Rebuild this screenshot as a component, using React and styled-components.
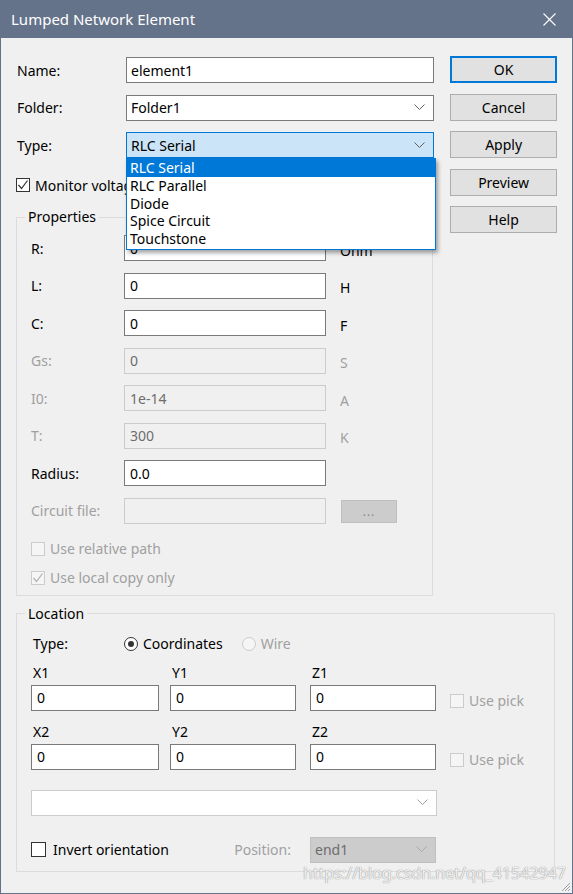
import styled, { createGlobalStyle } from "styled-components";

const GlobalStyle = createGlobalStyle`
  html, body { margin: 0; padding: 0; background: #ffffff; }
  body {
    font-family: "Noto Sans", "Open Sans", sans-serif;
    font-size: 14px;
    color: #000;
  }
  * { box-sizing: border-box; }
`;

const Window = styled.div`
  position: relative;
  width: 573px;
  height: 894px;
  background: #f0f0f0;
  border: 1px solid #65738a;
  border-top: none;
  overflow: hidden;
`;

const TitleBar = styled.div`
  height: 38px;
  margin: 0 -1px;
  background: #65738a;
  color: #fff;
  display: flex;
  align-items: center;
  justify-content: space-between;
  padding: 0 17px 0 11px;
  font-size: 15px;
`;

const Body = styled.div`
  padding: 19px 15px 0 15px;
`;

const Upper = styled.div`
  display: flex;
  align-items: flex-start;
`;

const LeftCol = styled.div`
  width: 419px;
`;

const ButtonCol = styled.div`
  margin-left: 16px;
  margin-top: -1px;
  width: 107px;
  display: flex;
  flex-direction: column;
  gap: 10.5px;
`;

const Button = styled.div`
  height: 27px;
  display: flex;
  align-items: center;
  justify-content: center;
  background: #e1e1e1;
  border: ${({ $default }) => ($default ? "2px solid #0078d7" : "1px solid #adadad")};
  color: #000;
`;

const TopRows = styled.div`
  display: flex;
  flex-direction: column;
  gap: 11.5px;
`;

const FormRow = styled.div`
  display: grid;
  grid-template-columns: 110px 308px;
  align-items: center;
  height: 26px;
  position: relative;
`;

const Label = styled.span`
  padding-left: 1px;
  color: ${({ $disabled }) => ($disabled ? "#a0a0a0" : "#000")};
  white-space: nowrap;
`;

const TextBox = styled.div`
  height: 26px;
  border: 1px solid ${({ $disabled }) => ($disabled ? "#cccccc" : "#7a7a7a")};
  background: ${({ $disabled }) => ($disabled ? "#f0f0f0" : "#fff")};
  color: ${({ $disabled }) => ($disabled ? "#6d6d6d" : "#000")};
  display: flex;
  align-items: center;
  padding-left: ${({ $pl }) => ($pl ?? 5)}px;
  width: ${({ $w }) => ($w ? `${$w}px` : "auto")};
`;

const Select = styled.div`
  position: relative;
  height: 26px;
  border: 1px solid
    ${({ $active, $disabled, $muted }) =>
      $active ? "#0078d7" : $disabled ? "#bfbfbf" : $muted ? "#cccccc" : "#7a7a7a"};
  background: ${({ $active, $disabled }) => ($active ? "#cce4f7" : $disabled ? "#cccccc" : "#fff")};
  color: ${({ $disabled }) => ($disabled ? "#6d6d6d" : "#000")};
  display: flex;
  align-items: center;
  justify-content: space-between;
  padding: 0 8px 0 4px;
  width: ${({ $w }) => ($w ? `${$w}px` : "auto")};
  margin-top: ${({ $mt }) => $mt || 0}px;
  margin-right: ${({ $mr }) => $mr || 0}px;
`;

const DropList = styled.div`
  position: absolute;
  left: -1px;
  top: 25px;
  width: 310px;
  background: #fff;
  border: 1px solid #0078d7;
  box-shadow: 2px 3px 4px rgba(0, 0, 0, 0.35);
  z-index: 5;
  padding-bottom: 1px;
`;

const DropItem = styled.div`
  height: 17.8px;
  line-height: 17.8px;
  padding-left: 3px;
  background: ${({ $selected }) => ($selected ? "#0078d7" : "transparent")};
  color: ${({ $selected }) => ($selected ? "#fff" : "#000")};
`;

const CheckRow = styled.div`
  display: flex;
  align-items: center;
  height: 16px;
  gap: ${({ $gap }) => $gap || 5}px;
  margin-top: ${({ $mt }) => $mt || 0}px;
  color: ${({ $disabled }) => ($disabled ? "#a0a0a0" : "#000")};
  white-space: nowrap;
`;

const Box = styled.span`
  width: ${({ $size }) => $size || 14}px;
  height: ${({ $size }) => $size || 14}px;
  flex: none;
  border: 1px solid ${({ $disabled }) => ($disabled ? "#cccccc" : "#333333")};
  background: ${({ $disabled }) => ($disabled ? "#f5f5f5" : "#fff")};
  display: flex;
  align-items: center;
  justify-content: center;
`;

const Group = styled.fieldset`
  margin: ${({ $mt }) => $mt}px 0 0 0;
  padding: 0;
  border: 1px solid #dcdcdc;
  width: ${({ $w }) => $w}px;
  min-width: 0;
`;

const Legend = styled.legend`
  margin-left: 8px;
  padding: 0 3px;
  line-height: 20px;
  height: 20px;
`;

const PropsBody = styled.div`
  padding: 8px 0 9px 14px;
  display: flex;
  flex-direction: column;
`;

const PropGrid = styled.div`
  display: grid;
  grid-template-columns: 93px 202px auto;
  row-gap: 11.5px;
  align-items: center;
  & > * {
    height: 26px;
  }
`;

const CellLabel = styled.span`
  display: flex;
  align-items: center;
  color: ${({ $disabled }) => ($disabled ? "#a0a0a0" : "#000")};
  white-space: nowrap;
`;

const Unit = styled.span`
  display: flex;
  align-items: center;
  padding: 4px 0 0 14px;
  color: ${({ $disabled }) => ($disabled ? "#a0a0a0" : "#000")};
`;

const BrowseButton = styled.div`
  && {
    height: 23px;
  }
  width: 56px;
  margin: 1px 0 0 15px;
  background: #cccccc;
  border: 1px solid #bfbfbf;
  color: #8a8a8a;
  display: flex;
  align-items: center;
  justify-content: center;
  font-size: 12px;
  letter-spacing: 1px;
`;

const LocBody = styled.div`
  padding: 10px 0 8px 14px;
  display: flex;
  flex-direction: column;
`;

const TypeLine = styled.div`
  display: flex;
  align-items: center;
  height: 20px;
`;

const TypeLabel = styled.span`
  width: 93px;
  padding-left: 2px;
`;

const RadioOpt = styled.span`
  display: flex;
  align-items: center;
  gap: 5px;
  margin-right: 19px;
  color: ${({ $disabled }) => ($disabled ? "#a0a0a0" : "#000")};
`;

const Circle = styled.span`
  width: 14px;
  height: 14px;
  border-radius: 50%;
  border: 1px solid ${({ $disabled }) => ($disabled ? "#cccccc" : "#333")};
  background: ${({ $disabled }) => ($disabled ? "#f5f5f5" : "#fff")};
  display: flex;
  align-items: center;
  justify-content: center;
  &::after {
    content: "";
    width: 6px;
    height: 6px;
    border-radius: 50%;
    background: ${({ $on }) => ($on ? "#333" : "transparent")};
  }
`;

const CoordGrid = styled.div`
  display: grid;
  grid-template-columns: 139px 140px 140px auto;
  margin-top: ${({ $mt }) => $mt}px;
  align-items: end;
`;

const CoordLabel = styled.span`
  height: 18px;
  line-height: 18px;
  padding-left: 2px;
  margin-bottom: 3px;
`;

const PickCell = styled.div`
  padding-bottom: 2px;
`;

const BottomLine = styled.div`
  display: flex;
  align-items: center;
  margin-top: 21px;
  height: 26px;
`;

const PositionLabel = styled.span`
  color: #a0a0a0;
  margin-left: auto;
  margin-right: 19px;
`;

const Watermark = styled.div`
  position: absolute;
  right: 6px;
  bottom: 9px;
  font-size: 16px;
  color: rgba(255, 255, 255, 0.85);
  text-shadow: 0 0 1px #9a9a9a, 0 0 1px #9a9a9a;
`;

const Grip = styled.svg`
  position: absolute;
  right: 1px;
  bottom: 1px;
`;

function Chevron({ color = "#606060" }) {
  return (
    <svg width="11" height="7" viewBox="0 0 11 7">
      <polyline points="0.5,0.5 5.5,5.5 10.5,0.5" fill="none" stroke={color} strokeWidth="1" />
    </svg>
  );
}

function Check({ color = "#333" }) {
  return (
    <svg width="12" height="12" viewBox="0 0 12 12">
      <polyline points="1.5,6 4.5,9.5 10.5,1.5" fill="none" stroke={color} strokeWidth="1.2" />
    </svg>
  );
}

function CheckBox({ checked, disabled, label, mt, size, gap }) {
  return (
    <CheckRow $mt={mt} $disabled={disabled} $gap={gap}>
      <Box $disabled={disabled} $size={size}>
        {checked && <Check color={disabled ? "#b0b0b0" : "#333"} />}
      </Box>
      {label}
    </CheckRow>
  );
}

const props = [
  { l: "R:", v: "0", u: "Ohm" },
  { l: "L:", v: "0", u: "H" },
  { l: "C:", v: "0", u: "F" },
  { l: "Gs:", v: "0", u: "S", d: true },
  { l: "I0:", v: "1e-14", u: "A", d: true },
  { l: "T:", v: "300", u: "K", d: true },
  { l: "Radius:", v: "0.0", u: "" },
];

const types = ["RLC Serial", "RLC Parallel", "Diode", "Spice Circuit", "Touchstone"];

function Row({ p }) {
  return (
    <>
      <CellLabel $disabled={p.d}>{p.l}</CellLabel>
      <TextBox $disabled={p.d}>{p.v}</TextBox>
      <Unit $disabled={p.d}>{p.u}</Unit>
    </>
  );
}

export default function App() {
  return (
    <>
      <GlobalStyle />
      <Window>
        <TitleBar>
          <span>Lumped Network Element</span>
          <svg width="13" height="13" viewBox="0 0 13 13">
            <line x1="0.5" y1="0.5" x2="12.5" y2="12.5" stroke="#fff" strokeWidth="1.1" />
            <line x1="12.5" y1="0.5" x2="0.5" y2="12.5" stroke="#fff" strokeWidth="1.1" />
          </svg>
        </TitleBar>

        <Body>
          <Upper>
            <LeftCol>
              <TopRows>
                <FormRow>
                  <Label>Name:</Label>
                  <TextBox $pl={4}>element1</TextBox>
                </FormRow>
                <FormRow>
                  <Label>Folder:</Label>
                  <Select>
                    Folder1
                    <Chevron />
                  </Select>
                </FormRow>
                <FormRow>
                  <Label>Type:</Label>
                  <Select $active>
                    RLC Serial
                    <Chevron />
                    <DropList>
                      {types.map((t, i) => (
                        <DropItem key={t} $selected={i === 0}>
                          {t}
                        </DropItem>
                      ))}
                    </DropList>
                  </Select>
                </FormRow>
              </TopRows>

              <CheckBox checked label="Monitor voltage and current" mt={19} />

              <Group $mt={14} $w={417}>
                <Legend>Properties</Legend>
                <PropsBody>
                  <PropGrid>
                    {props.map((p) => (
                      <Row key={p.l} p={p} />
                    ))}
                    <CellLabel $disabled>Circuit file:</CellLabel>
                    <TextBox $disabled />
                    <BrowseButton>...</BrowseButton>
                  </PropGrid>
                  <CheckBox disabled label="Use relative path" mt={17} />
                  <CheckBox disabled checked label="Use local copy only" mt={13} />
                </PropsBody>
              </Group>
            </LeftCol>

            <ButtonCol>
              <Button $default>OK</Button>
              <Button>Cancel</Button>
              <Button>Apply</Button>
              <Button>Preview</Button>
              <Button>Help</Button>
            </ButtonCol>
          </Upper>

          <Group $mt={8} $w={539}>
            <Legend>Location</Legend>
            <LocBody>
              <TypeLine>
                <TypeLabel>Type:</TypeLabel>
                <RadioOpt>
                  <Circle $on />
                  Coordinates
                </RadioOpt>
                <RadioOpt $disabled>
                  <Circle $disabled />
                  Wire
                </RadioOpt>
              </TypeLine>

              {[1, 2].map((n) => (
                <CoordGrid key={n} $mt={n === 1 ? 10 : 12}>
                  <CoordLabel>X{n}</CoordLabel>
                  <CoordLabel>Y{n}</CoordLabel>
                  <CoordLabel>Z{n}</CoordLabel>
                  <span />
                  <TextBox $w={128}>0</TextBox>
                  <TextBox $w={126}>0</TextBox>
                  <TextBox $w={126}>0</TextBox>
                  <PickCell>
                    <CheckBox disabled label="Use pick" />
                  </PickCell>
                </CoordGrid>
              ))}

              <Select $muted $w={406} $mt={20}>
                <span />
                <Chevron color="#a0a0a0" />
              </Select>

              <BottomLine>
                <CheckBox label="Invert orientation" size={15} gap={7} />
                <PositionLabel>Position:</PositionLabel>
                <Select $disabled $w={126} $mr={118}>
                  end1
                  <Chevron color="#a8a8a8" />
                </Select>
              </BottomLine>
            </LocBody>
          </Group>
        </Body>

        <Watermark>https://blog.csdn.net/qq_41542947</Watermark>
        <Grip width="12" height="12" viewBox="0 0 12 12">
          <line x1="11" y1="3" x2="3" y2="11" stroke="#9aa0a8" />
          <line x1="11" y1="6" x2="6" y2="11" stroke="#9aa0a8" />
          <line x1="11" y1="9" x2="9" y2="11" stroke="#9aa0a8" />
        </Grip>
      </Window>
    </>
  );
}
